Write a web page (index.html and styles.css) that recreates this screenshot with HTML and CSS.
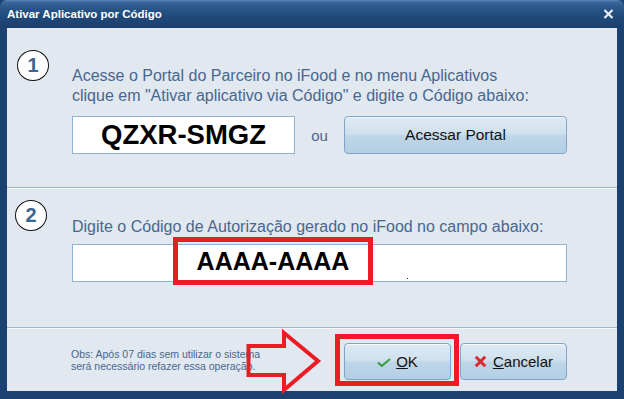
FILE: index.html
```html
<!DOCTYPE html>
<html lang="pt-BR">
<head>
<meta charset="utf-8">
<title>Ativar Aplicativo por Código</title>
<link rel="stylesheet" href="styles.css">
</head>
<body>
<div class="window">
  <div class="titlebar">
    <span class="title">Ativar Aplicativo por Código</span>
    <svg class="close" width="11" height="10" viewBox="0 0 11 10"><path d="M1.5 1 L9.5 9 M9.5 1 L1.5 9" stroke="#e6edf5" stroke-width="2.2" fill="none"/></svg>
  </div>
  <div class="client">
    <section class="step step1">
      <div class="num">1</div>
      <div class="body">
        <p class="desc">Acesse o Portal do Parceiro no iFood e no menu Aplicativos<br>clique em "Ativar aplicativo via Código" e digite o Código abaixo:</p>
        <div class="row">
          <div class="codebox">QZXR-SMGZ</div>
          <span class="ou">ou</span>
          <button class="btn portal">Acessar Portal</button>
        </div>
      </div>
    </section>
    <section class="step step2">
      <div class="num">2</div>
      <div class="body">
        <p class="desc">Digite o Código de Autorização gerado no iFood no campo abaixo:</p>
        <div class="field">
          <div class="mark">AAAA-AAAA</div>
          <i class="dot"></i>
        </div>
      </div>
    </section>
    <footer class="footer">
      <p class="obs">Obs: Após 07 dias sem utilizar o sistema<br>será necessário refazer essa operação.</p>
      <div class="actions">
        <div class="okwrap">
          <button class="btn ok"><svg class="ico" width="14" height="9" viewBox="0 0 14 9"><path d="M1 4.5 L4.8 8 L13 1" stroke="#3a9a3c" stroke-width="2" fill="none"/></svg><span><u>O</u>K</span></button>
        </div>
        <button class="btn cancel"><svg class="ico" width="13" height="13" viewBox="0 0 13 13"><path d="M1.8 1.8 L11.2 11.2 M11.2 1.8 L1.8 11.2" stroke="#e0262b" stroke-width="3" fill="none"/></svg><span><u>C</u>ancelar</span></button>
      </div>
    </footer>
  </div>
  <svg class="arrow" width="90" height="79" viewBox="0 0 90 79"><polygon points="8.5,26 44,26 44,13 78,41 44,70 44,55 8.5,55" fill="none" stroke="#ed1c24" stroke-width="4" stroke-linejoin="miter"/></svg>
</div>
</body>
</html>
```
FILE: styles.css
```css
html, body {
  margin: 0;
  padding: 0;
  background: #1c406f;
}
.window {
  position: relative;
  width: 624px;
  height: 399px;
  box-sizing: border-box;
  background: #1c406f;
  border-radius: 6px 6px 0 0;
  display: flex;
  flex-direction: column;
  font-family: "Liberation Sans", Arial, sans-serif;
  overflow: hidden;
}
.titlebar {
  height: 28px;
  flex: none;
  display: flex;
  align-items: center;
  padding: 0 10px 0 7px;
  background: linear-gradient(#5a89bc 0, #3a679b 2px, #2a5688 8px, #204a7b 16px, #1b3f6d 28px);
  border-radius: 6px 6px 0 0;
}
.title {
  color: #fff;
  font-weight: bold;
  font-size: 11.5px;
  flex: 1;
}
.close {
  display: block;
  margin-top: -1px;
}
.client {
  flex: 1;
  margin: 0 7px 8px 7px;
  background: #e1e8f0;
  display: flex;
  flex-direction: column;
}
.step {
  display: grid;
  grid-template-columns: 32px 1fr;
  column-gap: 23px;
  align-items: start;
}
.step1 {
  padding: 22px 0 0 10px;
  height: 137px;
  border-bottom: 1px solid #9db5cf;
}
.step2 {
  border-top: 1px solid #f6f9fc;
  padding: 11px 0 0 8px;
  height: 127px;
  column-gap: 25px;
  border-bottom: 1px solid #9db5cf;
}
.num {
  width: 32px;
  height: 31px;
  box-sizing: border-box;
  border: 1px solid #111;
  border-radius: 50%;
  background: #fff;
  color: #3b6592;
  font-weight: bold;
  font-size: 20px;
  display: flex;
  align-items: center;
  justify-content: center;
}
.desc {
  margin: 16px 0 0 0;
  font-size: 16px;
  line-height: 20px;
  color: #48678e;
}
.step2 .desc {
  margin-top: 17px;
}
.row {
  display: flex;
  align-items: center;
  margin-top: 10px;
}
.codebox {
  width: 223px;
  height: 38px;
  box-sizing: border-box;
  border: 1px solid #8fb3d4;
  background: #fff;
  display: flex;
  align-items: center;
  justify-content: center;
  font-weight: bold;
  font-size: 27.5px;
  color: #000;
}
.ou {
  width: 49px;
  text-align: center;
  font-size: 15px;
  color: #48678e;
}
.btn {
  box-sizing: border-box;
  border: 1px solid #80a5c8;
  border-radius: 4px;
  background: linear-gradient(#dfeaf4 0, #cfe1ee 45%, #bcd5e8 55%, #b4cfe4 100%);
  box-shadow: inset 0 1px 0 rgba(255,255,255,0.7);
  font-family: "Liberation Sans", Arial, sans-serif;
  font-size: 15px;
  color: #111;
  display: flex;
  align-items: center;
  justify-content: center;
  padding: 0;
}
.portal {
  width: 223px;
  height: 38px;
  font-size: 15.5px;
}
.field {
  position: relative;
  width: 495px;
  height: 38px;
  box-sizing: border-box;
  border: 1px solid #8fb3d4;
  background: #fff;
  margin-top: 7px;
}
.mark {
  position: absolute;
  left: 100px;
  top: -8px;
  width: 200px;
  height: 48px;
  box-sizing: border-box;
  border: 5px solid #ed1c24;
  display: flex;
  align-items: center;
  justify-content: center;
  font-weight: bold;
  font-size: 25px;
  color: #000;
}
.dot {
  position: absolute;
  left: 334px;
  top: 33px;
  width: 1px;
  height: 1px;
  background: #222;
}
.footer {
  flex: 1;
  border-top: 1px solid #f6f9fc;
  display: flex;
  align-items: center;
  padding: 0 50px 0 64px;
}
.obs {
  margin: 0;
  font-size: 10.5px;
  line-height: 12px;
  color: #48678e;
}
.actions {
  margin-left: auto;
  display: flex;
  gap: 9px;
  margin-top: 2px;
}
.okwrap {
  position: relative;
}
.okwrap::after {
  content: "";
  position: absolute;
  left: -9px;
  top: -9px;
  right: -8px;
  bottom: -6px;
  border: 5px solid #ed1c24;
  pointer-events: none;
}
.ok, .cancel {
  width: 107px;
  height: 37px;
}
.ok .ico {
  margin-right: 5px;
  margin-top: 2px;
}
.cancel .ico {
  margin-right: 6px;
}
.arrow {
  position: absolute;
  left: 240px;
  top: 320px;
}
```
